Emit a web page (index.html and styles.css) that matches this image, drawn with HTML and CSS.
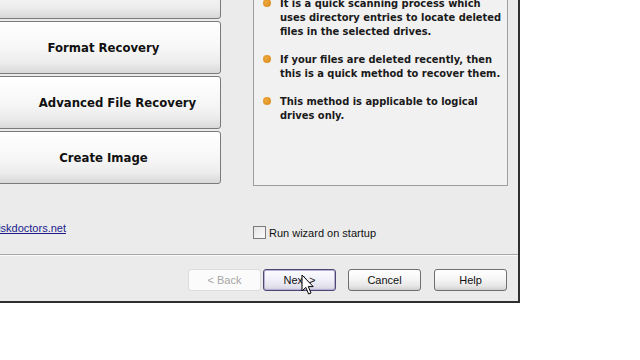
FILE: index.html
```html
<!DOCTYPE html>
<html>
<head>
<meta charset="utf-8">
<link rel="stylesheet" href="styles.css">
</head>
<body>
<div class="window">
  <div class="top">
    <div class="options">
      <button class="big-btn">Quick Recovery</button>
      <button class="big-btn">Format Recovery</button>
      <button class="big-btn shifted">Advanced File Recovery</button>
      <button class="big-btn">Create Image</button>
    </div>
    <div class="panel">
      <ul class="points">
        <li>It is a quick scanning process which<br>uses directory entries to locate deleted<br>files in the selected drives.</li>
        <li>If your files are deleted recently, then<br>this is a quick method to recover them.</li>
        <li>This method is applicable to logical<br>drives only.</li>
      </ul>
    </div>
  </div>
  <div class="mid">
    <div class="link-box"><a class="link" href="#">www.diskdoctors.net</a></div>
    <label class="check"><span class="box"></span>Run wizard on startup</label>
  </div>
  <div class="sep"></div>
  <div class="actions">
    <button class="btn disabled">&lt; Back</button>
    <button class="btn next">Next &gt;</button>
    <button class="btn cancel">Cancel</button>
    <button class="btn help">Help</button>
  </div>
  <svg class="cursor" width="14" height="22" viewBox="0 0 14 22">
    <path d="M1 1 L1 17 L4.8 13.4 L7.6 20 L10 19 L7.3 12.6 L12.2 12.6 Z" fill="#fff" stroke="#000" stroke-width="1" stroke-linejoin="miter"/>
  </svg>
</div>
</body>
</html>
```
FILE: styles.css
```css
* { box-sizing: border-box; }
html, body { margin: 0; padding: 0; background: #ffffff; }
body { width: 640px; height: 360px; overflow: hidden; }

.window {
  position: relative;
  width: 520px;
  height: 303px;
  background: #ebebeb;
  border-right: 2px solid #2f2f2f;
  border-bottom: 2px solid #2f2f2f;
  overflow: hidden;
  display: flex;
  flex-direction: column;
  font-family: "Liberation Sans", Arial, sans-serif;
}

.top {
  display: flex;
  height: 186px;
  flex: none;
}

.options {
  display: flex;
  flex-direction: column;
  gap: 2px;
  width: 235px;
  margin-left: -14px;
  margin-top: -34px;
  flex: none;
}

.big-btn {
  height: 53px;
  border: 1px solid #7a7a7a;
  border-radius: 3px;
  background: linear-gradient(#ffffff 0%, #f7f7f7 50%, #ececec 80%, #d8d8d8 100%);
  font-family: "DejaVu Sans Condensed", "DejaVu Sans", sans-serif;
  font-weight: bold;
  font-size: 13px;
  color: #111;
  padding: 0;
}

.big-btn.shifted { padding-left: 28px; }

.panel {
  margin-left: 32px;
  margin-top: -20px;
  width: 255px;
  height: 206px;
  flex: none;
  border: 1px solid #9d9d9d;
  background: #f1f1f1;
  padding: 16px 0 0 26px;
  overflow: hidden;
}

.points {
  list-style: none;
  margin: 0;
  padding: 0;
  font-family: "DejaVu Sans Condensed", "DejaVu Sans", sans-serif;
  font-weight: bold;
  font-size: 11px;
  line-height: 14px;
  color: #1a1a1a;
  white-space: nowrap;
}

.points li {
  position: relative;
  margin-bottom: 14px;
}

.points li::before {
  content: "";
  position: absolute;
  left: -17px;
  top: 2px;
  width: 8px;
  height: 8px;
  border-radius: 50%;
  background: radial-gradient(circle at 40% 40%, #f0a83a, #d4861a);
}

.mid {
  display: flex;
  align-items: flex-start;
  height: 20px;
  margin-top: 34px;
  flex: none;
}

.link-box {
  width: 66px;
  display: flex;
  justify-content: flex-end;
  margin-top: 1px;
  flex: none;
}

.link {
  font-size: 11px;
  line-height: 14px;
  color: #1c1c8c;
  text-decoration: underline;
  white-space: nowrap;
}

.check {
  display: flex;
  align-items: center;
  gap: 3px;
  margin-left: 187px;
  margin-top: 6px;
  font-size: 11px;
  color: #111;
  height: 13px;
}

.box {
  width: 13px;
  height: 13px;
  border: 1px solid #7b7b7b;
  background: linear-gradient(135deg, #e4e4e4, #fbfbfb);
  flex: none;
}

.sep {
  margin-top: 14px;
  width: 518px;
  height: 2px;
  border-top: 1px solid #a8a8a8;
  border-bottom: 1px solid #fbfbfb;
  flex: none;
}

.actions {
  display: flex;
  margin-top: 13px;
  padding-left: 188px;
  flex: none;
}

.btn {
  width: 73px;
  height: 22px;
  border: 1px solid #6f6f6f;
  border-radius: 3px;
  background: linear-gradient(#ffffff 0%, #f6f6f6 45%, #e6e6e6 80%, #cfcfcf 100%);
  font-family: "Liberation Sans", Arial, sans-serif;
  font-size: 11px;
  color: #111;
  padding: 0;
}

.btn.disabled {
  border-color: #dcdcdc;
  background: #fbfbfb;
  color: #a6a6a6;
}

.btn.next {
  margin-left: 2px;
  border: 1px solid #4c4870;
  box-shadow: inset 0 0 0 1px #b4b0d6;
  background: linear-gradient(#fbfbff 0%, #f0eff8 50%, #e0dfea 85%, #cac8d8 100%);
}

.btn.cancel { margin-left: 12px; }
.btn.help { margin-left: 13px; }

.cursor {
  position: absolute;
  left: 301px;
  top: 274px;
}
```
